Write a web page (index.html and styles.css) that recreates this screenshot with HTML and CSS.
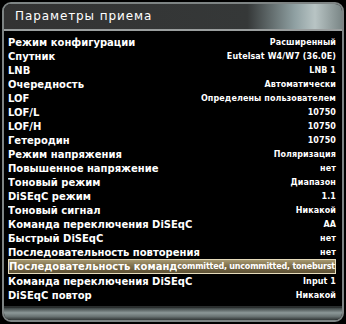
FILE: index.html
```html
<!DOCTYPE html>
<html lang="ru">
<head>
    <meta charset="UTF-8">
    <title>Параметры приема</title>
    <link rel="stylesheet" href="styles.css">
</head>
<body>
    <div class="frame">
        <div class="title">Параметры приема</div>

        <div class="list">
            <div class="row"><span class="label">Режим конфигурации</span><span class="value">Расширенный</span></div>
            <div class="row"><span class="label">Спутник</span><span class="value">Eutelsat W4/W7 (36.0E)</span></div>
            <div class="row"><span class="label">LNB</span><span class="value">LNB 1</span></div>
            <div class="row"><span class="label">Очередность</span><span class="value">Автоматически</span></div>
            <div class="row"><span class="label">LOF</span><span class="value">Определены пользователем</span></div>
            <div class="row"><span class="label">LOF/L</span><span class="value">10750</span></div>
            <div class="row"><span class="label">LOF/H</span><span class="value">10750</span></div>
            <div class="row"><span class="label">Гетеродин</span><span class="value">10750</span></div>
            <div class="row"><span class="label">Режим напряжения</span><span class="value">Поляризация</span></div>
            <div class="row"><span class="label">Повышенное напряжение</span><span class="value">нет</span></div>
            <div class="row"><span class="label">Тоновый режим</span><span class="value">Диапазон</span></div>
            <div class="row"><span class="label">DiSEqC режим</span><span class="value">1.1</span></div>
            <div class="row"><span class="label">Тоновый сигнал</span><span class="value">Никакой</span></div>
            <div class="row"><span class="label">Команда переключения DiSEqC</span><span class="value">AA</span></div>
            <div class="row"><span class="label">Быстрый DiSEqC</span><span class="value">нет</span></div>
            <div class="row"><span class="label">Последовательность повторения</span><span class="value">нет</span></div>
            <div class="row selected"><span class="label">Последовательность команд</span><span class="value">committed, uncommitted, toneburst</span></div>
            <div class="row"><span class="label">Команда переключения DiSEqC</span><span class="value">Input 1</span></div>
            <div class="row"><span class="label">DiSEqC повтор</span><span class="value">Никакой</span></div>
        </div>

        <div class="bottom"></div>
    </div>
</body>
</html>
```

FILE: styles.css
```css
body {
    margin: 0;
    background-color: #000;
    font-family: "DejaVu Sans", Verdana, sans-serif;
    color: #fff;
}
.frame {
    width: 342px;
    height: 320px;
    margin: 2px;
    box-sizing: border-box;
    border: 2px solid #7e8484;
    border-radius: 9px;
    background-color: #000;
    overflow: hidden;
    display: flex;
    flex-direction: column;
}
.title {
    height: 25px;
    line-height: 25px;
    padding-left: 11px;
    font-size: 12px;
    letter-spacing: 0.9px;
    background: linear-gradient(to right, #333 0%, #353838 72%, #8fa0a2 86%, #b8c4c4 92%, #7a8686 100%);
    border-bottom: 2px solid #9a9e9e;
}
.list {
    flex: 1;
    padding: 4px 6px 0 4px;
}
.row {
    display: flex;
    align-items: center;
    height: 14px;
}
.label {
    flex: 1;
    white-space: nowrap;
    overflow: hidden;
    font-size: 10px;
    font-weight: bold;
}
.value {
    flex: none;
    white-space: nowrap;
    font-size: 8px;
    font-weight: bold;
    letter-spacing: 0.1px;
}
.selected {
    box-sizing: border-box;
    height: 15px;
    border: 1px solid #e6dcbc;
    background: linear-gradient(#a69870, #7a6c48 50%, #5c5034);
}
.selected .value {
    letter-spacing: -0.2px;
}
.bottom {
    height: 12px;
    border-top: 2px solid #2a2e2e;
    background: linear-gradient(#3c4444, #8c9898 40%, #6a7474 70%, #303636);
}
```
